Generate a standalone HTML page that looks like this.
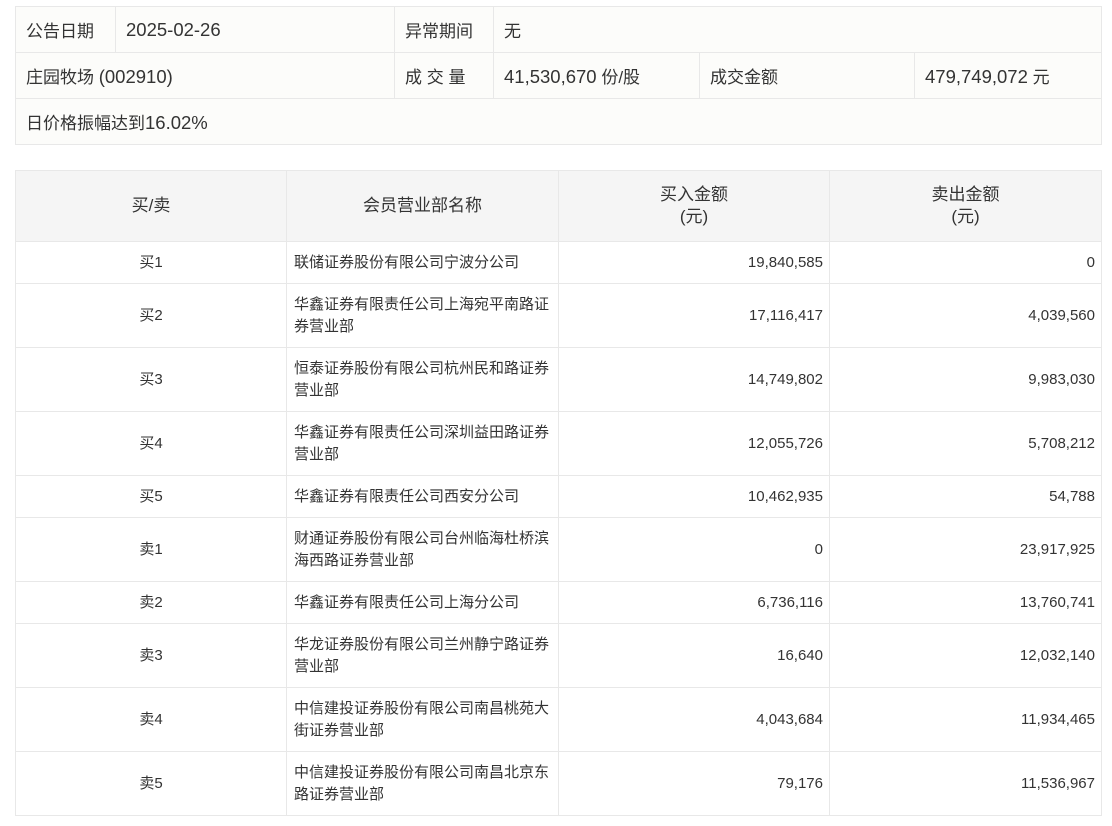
<!DOCTYPE html>
<html><head><meta charset="utf-8"><style>
body{margin:0;background:#fff;font-family:"Liberation Sans","Noto Sans CJK SC",sans-serif;color:#333;}
table{border-collapse:collapse;table-layout:fixed;position:absolute;left:15px;}
td{border:1px solid #e8e8e8;padding:0;box-sizing:border-box;}
#t1{top:6px;width:1086px;background:#fcfcfa;font-size:17px;}
#t1 td{height:46px;padding-left:10px;}
#t1 .n{font-size:18.5px;}
#t2{top:170px;width:1086px;font-size:15px;}
#t2 th{background:#f5f5f5;border:1px solid #e8e8e8;font-weight:normal;font-size:17px;height:70px;line-height:22px;padding:0;}
#t2 td{line-height:22px;white-space:nowrap;}
.c{text-align:center}.r{text-align:right;padding-right:6px}.l{padding-left:7px;padding-right:2px}
.s{height:42px}.d{height:64px}
</style></head><body>
<table id="t1">
<colgroup><col style="width:100px"><col style="width:279px"><col style="width:99px"><col style="width:206px"><col style="width:215px"><col style="width:187px"></colgroup>
<tr><td>公告日期</td><td><span class="n">2025-02-26</span></td><td>异常期间</td><td colspan="3">无</td></tr>
<tr><td colspan="2">庄园牧场 <span class="n">(002910)</span></td><td>成 交 量</td><td><span class="n">41,530,670</span> 份/股</td><td>成交金额</td><td><span class="n">479,749,072</span> 元</td></tr>
<tr><td colspan="6">日价格振幅达到<span class="n">16.02%</span></td></tr>
</table>
<table id="t2">
<colgroup><col style="width:271px"><col style="width:272px"><col style="width:271px"><col style="width:272px"></colgroup>
<tr><th>买/卖</th><th>会员营业部名称</th><th>买入金额<br>(元)</th><th>卖出金额<br>(元)</th></tr>
<tr class="s"><td class="c">买1</td><td class="l">联储证券股份有限公司宁波分公司</td><td class="r">19,840,585</td><td class="r">0</td></tr>
<tr class="d"><td class="c">买2</td><td class="l">华鑫证券有限责任公司上海宛平南路证<br>券营业部</td><td class="r">17,116,417</td><td class="r">4,039,560</td></tr>
<tr class="d"><td class="c">买3</td><td class="l">恒泰证券股份有限公司杭州民和路证券<br>营业部</td><td class="r">14,749,802</td><td class="r">9,983,030</td></tr>
<tr class="d"><td class="c">买4</td><td class="l">华鑫证券有限责任公司深圳益田路证券<br>营业部</td><td class="r">12,055,726</td><td class="r">5,708,212</td></tr>
<tr class="s"><td class="c">买5</td><td class="l">华鑫证券有限责任公司西安分公司</td><td class="r">10,462,935</td><td class="r">54,788</td></tr>
<tr class="d"><td class="c">卖1</td><td class="l">财通证券股份有限公司台州临海杜桥滨<br>海西路证券营业部</td><td class="r">0</td><td class="r">23,917,925</td></tr>
<tr class="s"><td class="c">卖2</td><td class="l">华鑫证券有限责任公司上海分公司</td><td class="r">6,736,116</td><td class="r">13,760,741</td></tr>
<tr class="d"><td class="c">卖3</td><td class="l">华龙证券股份有限公司兰州静宁路证券<br>营业部</td><td class="r">16,640</td><td class="r">12,032,140</td></tr>
<tr class="d"><td class="c">卖4</td><td class="l">中信建投证券股份有限公司南昌桃苑大<br>街证券营业部</td><td class="r">4,043,684</td><td class="r">11,934,465</td></tr>
<tr class="d"><td class="c">卖5</td><td class="l">中信建投证券股份有限公司南昌北京东<br>路证券营业部</td><td class="r">79,176</td><td class="r">11,536,967</td></tr>
</table>
</body></html>
